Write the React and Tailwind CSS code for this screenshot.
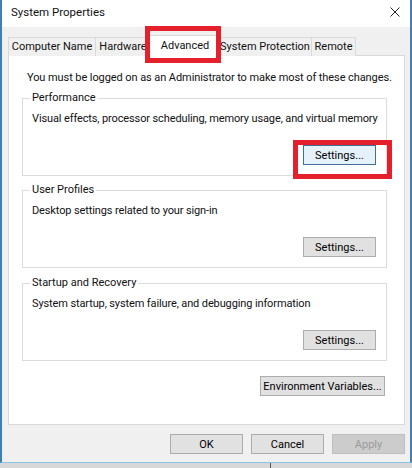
import { useState } from 'react'

const font = { fontFamily: 'Roboto, "Noto Sans", sans-serif' }

const tabs = [
  { label: 'Computer Name', w: 'w-[88px]' },
  { label: 'Hardware', w: 'w-[56px]' },
  { label: 'Advanced', w: 'w-[66px]' },
  { label: 'System Protection', w: 'w-[94px]' },
  { label: 'Remote', w: 'w-[45px]' },
]

function WinButton({ children, className = '', focused, disabled, marked }) {
  let look = 'bg-[#e1e1e1] border-[#adadad] text-black'
  if (focused) look = 'bg-[#e5f1fb] border-[#3f6f98] text-black'
  if (disabled) look = 'bg-[#cccccc] border-[#bfbfbf] text-[#9a9a9a]'
  return (
    <div className={`relative h-[20px] border flex items-center justify-center text-[11px] leading-none whitespace-nowrap ${look} ${className}`}>
      {children}
      {marked && (
        <span className="absolute left-[-11px] top-[-6px] w-[99px] h-[39px] border-[5px] border-[#e3202b] pointer-events-none" />
      )}
    </div>
  )
}

function GroupBox({ title, text, marked, className = '' }) {
  return (
    <div className={`relative border border-[#dcdcdc] h-[78px] flex flex-col ${className}`}>
      <span className="absolute left-[7px] top-[-9px] bg-white px-[2px] text-[11px] leading-[16px]">{title}</span>
      <p className="pl-[9px] pt-[12px] text-[11px] leading-[16px] tracking-[-0.12px] whitespace-nowrap">{text}</p>
      <div className="mt-auto mb-[10px] mr-[10px] flex justify-end">
        <WinButton className="w-[73px]" focused={marked} marked={marked}>Settings...</WinButton>
      </div>
    </div>
  )
}

export default function App() {
  const [active] = useState('Advanced')

  return (
    <div className="w-[412px] h-[468px] bg-[#d8d8d8] overflow-hidden relative" style={font}>
      <div className="w-[412px] h-[463px] flex flex-col border-x-2 border-b border-x-[#3f7fb3] border-b-[#8ec3e8] bg-[#f0f0f0] text-[#111]">
        {/* title bar */}
        <div className="h-[27px] bg-white flex items-center justify-between pl-[9px] pr-[9px] shrink-0">
          <span className="text-[11.5px] leading-none mt-[-2px]">System Properties</span>
          <svg width="10" height="10" viewBox="0 0 10 10" className="mt-[-3px] mr-[1px]">
            <path d="M0.5 0.5 L9.5 9.5 M9.5 0.5 L0.5 9.5" stroke="#222" strokeWidth="1" />
          </svg>
        </div>

        <div className="flex-1 flex flex-col pl-[6px] pr-[5px] pt-[10px]">
          {/* tabs */}
          <div className="flex h-[19px] relative z-10">
            {tabs.map((t) => {
              const sel = t.label === active
              return sel ? (
                <div key={t.label} className={`relative ${t.w} h-[22px] -mt-[2px] -mx-[2px] px-[2px] box-content bg-white border border-b-0 border-[#d9d9d9] flex items-start justify-center pt-[2px] text-[11px] leading-[16px] whitespace-nowrap`}>
                  {t.label}
                  <span className="absolute left-[-5px] top-[-10px] w-[76px] h-[37px] border-[5px] border-[#e3202b] pointer-events-none" />
                </div>
              ) : (
                <div key={t.label} className={`${t.w} h-[19px] border border-b-0 border-[#d9d9d9] -ml-px first:ml-0 bg-[#f0f0f0] flex items-center justify-center text-[11px] leading-[16px] whitespace-nowrap`}>
                  {t.label}
                </div>
              )
            })}
          </div>

          {/* tab page */}
          <div className="h-[370px] -mt-px bg-white border border-[#d9d9d9] flex flex-col pl-[13px] pr-[17px]">
            <p className="mt-[14px] pl-[5px] text-[11px] leading-[16px] tracking-[-0.08px] whitespace-nowrap">
              You must be logged on as an Administrator to make most of these changes.
            </p>
            <GroupBox className="mt-[12px]" title="Performance" text="Visual effects, processor scheduling, memory usage, and virtual memory" marked />
            <GroupBox className="mt-[14px]" title="User Profiles" text="Desktop settings related to your sign-in" />
            <GroupBox className="mt-[15px]" title="Startup and Recovery" text="System startup, system failure, and debugging information" />
            <div className="mt-[15px] flex justify-end pr-[2px]">
              <WinButton className="w-[125px]">Environment Variables...</WinButton>
            </div>
          </div>

          {/* dialog buttons */}
          <div className="mt-[9px] flex justify-end gap-[8px]">
            <WinButton className="w-[73px]">OK</WinButton>
            <WinButton className="w-[73px]">Cancel</WinButton>
            <WinButton className="w-[73px]" disabled>Apply</WinButton>
          </div>
        </div>
      </div>
      <div className="absolute left-[270px] top-[463px] w-px h-[5px] bg-[#555]" />
    </div>
  )
}
